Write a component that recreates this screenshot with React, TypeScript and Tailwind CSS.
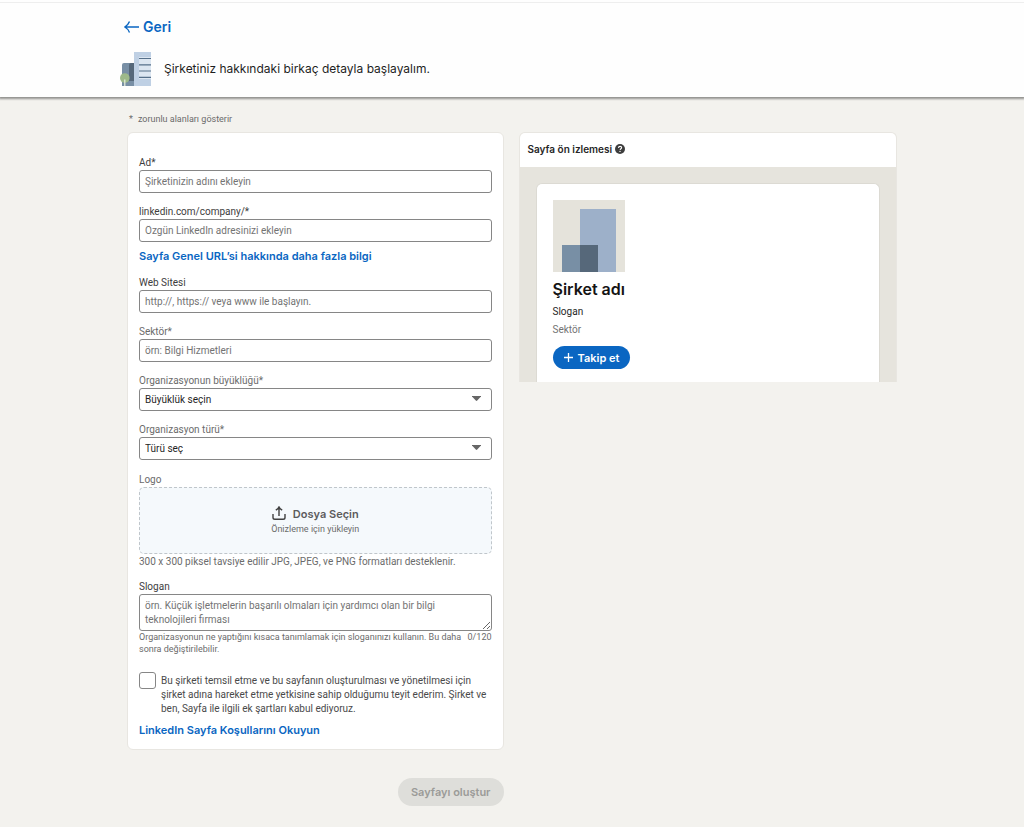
import { useState } from 'react';
import type { ReactNode } from 'react';

const controlClass =
  'block h-[23px] w-full rounded-[3px] border border-[#868686] bg-white px-[5px] text-[10px] text-[#1f1f1f] placeholder:text-[#737373] placeholder:opacity-100';

type FieldProps = {
  id: string;
  label: string;
  muted?: boolean;
  children: ReactNode;
};

function Field({ id, label, muted, children }: FieldProps) {
  return (
    <div>
      <label
        htmlFor={id}
        className={`block h-4 text-[10px] leading-[18px] ${muted ? 'text-[#6b6b6b]' : 'text-[#3d3d3d]'}`}
      >
        {label}
      </label>
      {children}
    </div>
  );
}

function SelectField({ id, label, option }: { id: string; label: string; option: string }) {
  return (
    <Field id={id} label={label} muted>
      <div className="relative">
        <select id={id} className={`${controlClass} appearance-none`}>
          <option>{option}</option>
        </select>
        <svg
          className="pointer-events-none absolute top-2 right-[11px] h-[5px] w-[9px]"
          viewBox="0 0 9 5"
          fill="#666666"
          aria-hidden="true"
        >
          <path d="M0 0h9v.6L5.2 4.6a1 1 0 0 1-1.4 0L0 .6z" />
        </svg>
      </div>
    </Field>
  );
}

function BuildingIcon() {
  return (
    <svg className="h-[34px] w-8 shrink-0" viewBox="0 0 32 34" aria-hidden="true">
      <path d="M2 13a2 2 0 0 1 2-2h10v23H2z" fill="#788fa5" />
      <path d="M9 13a2 2 0 0 1 2-2h3v18H9z" fill="#56687a" />
      <path d="M14 0h17v34H14z" fill="#bfd0e4" />
      <path d="M19 5h12v22H19z" fill="#dce6f1" />
      <path d="M19 6.5h12M19 12.8h12M19 19h12M19 25.3h12" stroke="#56708a" strokeWidth="1.2" />
      <circle cx="4.8" cy="26" r="4.8" fill="#9db98a" />
      <path d="M4.2 27.5h1.2V34H4.2z" fill="#e8f0de" />
    </svg>
  );
}

function PlaceholderLogo() {
  return (
    <svg className="size-[72px]" viewBox="0 0 72 72" aria-hidden="true">
      <path fill="#e5e3db" d="M0 0h72v72H0z" />
      <path fill="#9db0c9" d="M27 9h36v63H27z" />
      <path fill="#788fa5" d="M9 45h18v27H9z" />
      <path fill="#56687a" d="M27 45h18v27H27z" />
    </svg>
  );
}

function Header() {
  return (
    <header className="relative bg-[#fefefe] shadow-[0_1px_2px_1px_rgba(0,0,0,0.4)]">
      <div className="h-[3px] border-b border-[#eeeeee]" />
      <div className="mx-auto flex w-full max-w-[784px] flex-col items-start gap-[17px] pt-[15px] pb-[11px]">
        <a
          href="#"
          className="ml-1 flex items-center gap-1 font-['Inter',sans-serif] text-sm leading-[17px] font-semibold text-[#0a66c2]"
        >
          <svg className="h-3 w-[15px]" viewBox="0 0 15 12" fill="none" stroke="currentColor" strokeWidth="1.4" aria-hidden="true">
            <path d="M15 6H1M5.5.5Q4 4.3.8 6q3.2 1.7 4.7 5.5" />
          </svg>
          Geri
        </a>
        <div className="flex items-center gap-3">
          <BuildingIcon />
          <h1 className="font-['Inter',sans-serif] text-xs leading-5 text-[#1f1f1f]">
            Şirketiniz hakkındaki birkaç detayla başlayalım.
          </h1>
        </div>
      </div>
    </header>
  );
}

function CompanyForm() {
  const [tagline, setTagline] = useState('');

  return (
    <form className="flex min-w-0 flex-1 flex-col" onSubmit={(e) => e.preventDefault()}>
      <div className="rounded-md border border-[#e8e6e1] bg-white px-[11px] pt-[21px] pb-[11px]">
        <div className="flex flex-col gap-[10px]">
          <Field id="name" label="Ad*">
            <input id="name" type="text" placeholder="Şirketinizin adını ekleyin" className={controlClass} />
          </Field>
          <Field id="slug" label="linkedin.com/company/*">
            <input id="slug" type="text" placeholder="Özgün LinkedIn adresinizi ekleyin" className={controlClass} />
          </Field>
        </div>
        <a
          href="#"
          className="mt-[6px] mb-[10px] block font-['Inter',sans-serif] text-[11px] leading-4 font-semibold text-[#0a66c2]"
        >
          Sayfa Genel URL’si hakkında daha fazla bilgi
        </a>
        <div className="flex flex-col gap-[10px]">
          <Field id="website" label="Web Sitesi">
            <input id="website" type="text" placeholder="http://, https:// veya www ile başlayın." className={controlClass} />
          </Field>
          <Field id="industry" label="Sektör*" muted>
            <input id="industry" type="text" placeholder="örn: Bilgi Hizmetleri" className={controlClass} />
          </Field>
          <SelectField id="size" label="Organizasyonun büyüklüğü*" option="Büyüklük seçin" />
          <SelectField id="type" label="Organizasyon türü*" option="Türü seç" />
        </div>

        <p className="mt-[11px] h-4 text-[10px] leading-[18px] text-[#6b6b6b]">Logo</p>
        <button
          type="button"
          className="flex h-[67px] w-full flex-col items-center justify-center rounded-[5px] border border-dashed border-[#c0c6cb] bg-[#f5f9fc]"
        >
          <span className="flex items-center gap-[7px] font-['Inter',sans-serif] text-[11px] leading-4 font-semibold text-[#5c5c5c]">
            <svg className="mb-[2px] size-[14px]" viewBox="0 0 14 14" fill="none" stroke="#404040" strokeWidth="1.4" aria-hidden="true">
              <path d="M1 8v3.5a1.8 1.8 0 0 0 1.8 1.8h8.4A1.8 1.8 0 0 0 13 11.5V8M7 10V1M3.8 4.2Q6.2 2.8 7 1q.8 1.8 3.2 3.2" />
            </svg>
            Dosya Seçin
          </span>
          <span className="text-[9px] leading-[14px] text-[#6b6b6b]">Önizleme için yükleyin</span>
        </button>
        <p className="pt-px text-[10px] leading-[14px] text-[#6b6b6b]">
          300 x 300 piksel tavsiye edilir JPG, JPEG, ve PNG formatları desteklenir.
        </p>

        <div className="mt-[9px]">
          <Field id="tagline" label="Slogan">
            <textarea
              id="tagline"
              maxLength={120}
              value={tagline}
              onChange={(e) => setTagline(e.target.value)}
              placeholder="örn. Küçük işletmelerin başarılı olmaları için yardımcı olan bir bilgi teknolojileri firması"
              className="block h-[37px] w-full overflow-hidden rounded-[3px] border border-[#868686] bg-white py-1 pr-10 pl-[5px] text-[10px] leading-[14px] placeholder:text-[#737373] placeholder:opacity-100"
            />
          </Field>
          <div className="flex justify-between text-[9px] leading-3 text-[#6b6b6b]">
            <p className="max-w-[325px]">
              Organizasyonun ne yaptığını kısaca tanımlamak için sloganınızı kullanın. Bu daha sonra değiştirilebilir.
            </p>
            <span>{tagline.length}/120</span>
          </div>
        </div>

        <div className="mt-[17px] flex items-start gap-[5px]">
          <input
            id="terms"
            type="checkbox"
            className="size-[17px] shrink-0 appearance-none rounded-[3px] border border-[#868686] bg-white checked:bg-[#0a66c2]"
          />
          <label htmlFor="terms" className="pt-[2px] text-[10px] leading-[14px] text-[#4a4a4a]">
            Bu şirketi temsil etme ve bu sayfanın oluşturulması ve yönetilmesi için şirket adına hareket etme yetkisine sahip
            olduğumu teyit ederim. Şirket ve ben, Sayfa ile ilgili ek şartları kabul ediyoruz.
          </label>
        </div>
        <a
          href="#"
          className="mt-[6px] block font-['Inter',sans-serif] text-[11px] leading-4 font-semibold text-[#0a66c2]"
        >
          LinkedIn Sayfa Koşullarını Okuyun
        </a>
      </div>
      <button
        type="submit"
        disabled
        className="mt-7 h-7 self-end rounded-full bg-[#dededa] px-[13px] font-['Inter',sans-serif] text-[11px] leading-4 font-semibold text-[#9b9b98]"
      >
        Sayfayı oluştur
      </button>
    </form>
  );
}

function PagePreview() {
  return (
    <section className="min-w-0 flex-1 overflow-hidden rounded-t-md border border-b-0 border-[#e8e6e1] bg-[#e6e4dd]">
      <div className="flex h-[34px] items-center gap-[3px] bg-white px-2 pb-[3px]">
        <h2 className="font-['Inter',sans-serif] text-[10px] leading-4 font-semibold text-[#262626]">Sayfa ön izlemesi</h2>
        <button type="button" aria-label="Yardım">
          <svg className="size-[10px]" viewBox="0 0 10 10" aria-hidden="true">
            <circle cx="5" cy="5" r="5" fill="#3d3d3d" />
            <path d="M3.5 3.9c0-1 .7-1.5 1.6-1.5s1.5.5 1.5 1.3c0 1-1.4 1-1.5 2.2" fill="none" stroke="#fff" strokeWidth="1.1" />
            <circle cx="5" cy="7.4" r=".7" fill="#fff" />
          </svg>
        </button>
      </div>
      <div className="px-4 pt-4">
        <div className="flex h-[199px] flex-col items-start rounded-t-md border border-b-0 border-[#dcdad3] bg-white px-4 pt-4">
          <PlaceholderLogo />
          <h3 className="mt-[6px] font-['Inter',sans-serif] text-base leading-[22px] font-semibold text-[#141414]">
            Şirket adı
          </h3>
          <p className="mt-1 text-[10px] leading-4 text-[#262626]">Slogan</p>
          <p className="mt-[2px] text-[10px] leading-4 text-[#737373]">Sektör</p>
          <button
            type="button"
            className="mt-2 flex h-[23px] items-center gap-[5px] rounded-full bg-[#0a66c2] px-[11px] font-['Inter',sans-serif] text-[11px] leading-4 font-semibold text-white"
          >
            <svg className="size-[9px]" viewBox="0 0 9 9" stroke="currentColor" strokeWidth="1.3" aria-hidden="true">
              <path d="M4.5 0v9M0 4.5h9" />
            </svg>
            Takip et
          </button>
        </div>
      </div>
    </section>
  );
}

export default function App() {
  return (
    <div className="min-h-screen bg-[#f3f2ee] font-['Roboto','Noto_Sans',sans-serif]">
      <Header />
      <main className="mx-auto w-full max-w-[770px] pt-[14px] pb-[22px]">
        <p className="flex gap-[5px] px-[2px] pb-[5px] text-[9px] leading-4 text-[#6b6b6b]">
          <span>*</span>
          zorunlu alanları gösterir
        </p>
        <div className="flex items-start gap-[15px]">
          <CompanyForm />
          <PagePreview />
        </div>
      </main>
    </div>
  );
}
